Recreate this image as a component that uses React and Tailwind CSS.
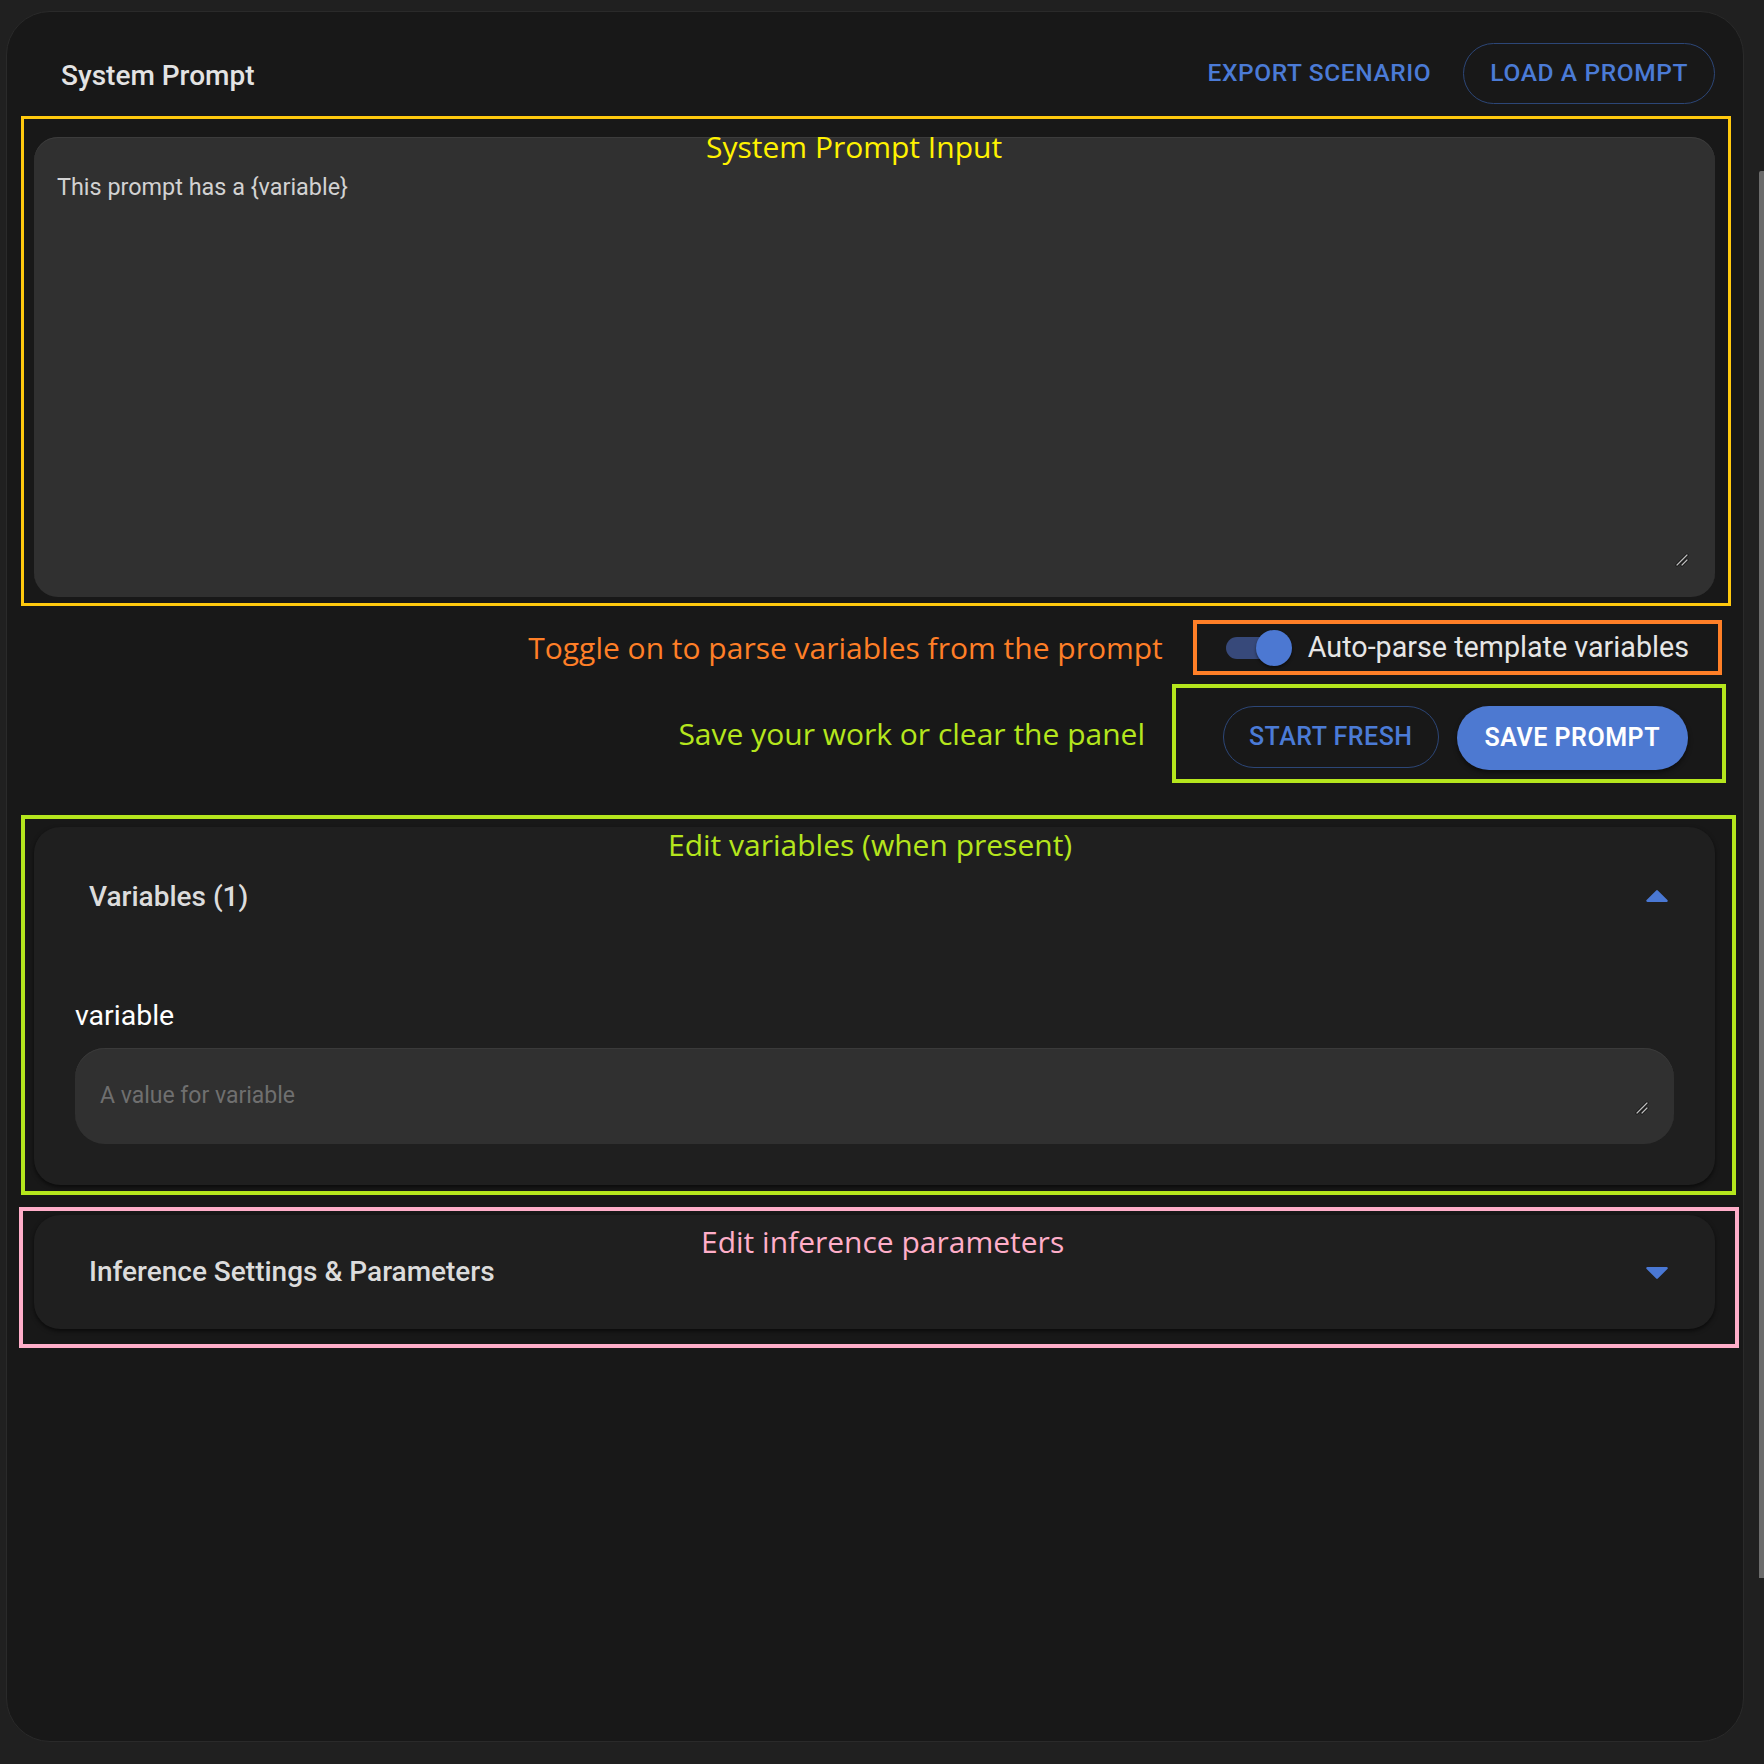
import React from "react";

const ui = { fontFamily: "Roboto, 'Liberation Sans', sans-serif" };
const note = { fontFamily: "'Open Sans', 'Noto Sans', sans-serif" };

function Arrow({ up }) {
  return (
    <svg width="46" height="46" viewBox="0 0 24 24" className="shrink-0">
      <path
        d={up ? "M7 14l5-5 5 5z" : "M7 10l5 5 5-5z"}
        fill="#4a78d4"
        stroke="#4a78d4"
        strokeWidth="1.2"
        strokeLinejoin="round"
      />
    </svg>
  );
}

function Grip({ className }) {
  return (
    <svg width="14" height="14" viewBox="0 0 14 14" className={className}>
      <path d="M2 12 L12 2 M7 12 L12 7" stroke="#111" strokeWidth="3" strokeLinecap="round" />
      <path d="M2 12 L12 2 M7 12 L12 7" stroke="#bdbdbd" strokeWidth="1.3" strokeLinecap="round" />
    </svg>
  );
}

export default function App() {
  return (
    <div className="flex h-[1764px] w-[1764px] bg-[#202020] overflow-hidden" style={ui}>
      <div className="relative mt-[11px] ml-[6px] h-[1731px] w-[1738px] shrink-0 rounded-[44px] border border-[#2a2a2a] bg-[#181818] pt-[31px] pl-[27px] pr-[28px]">
        {/* header */}
        <div className="flex h-[61px] items-center justify-between">
          <h2 className="pl-[27px] pt-[4px] text-[28px] font-medium text-[#e3e3e3]">System Prompt</h2>
          <div className="flex items-center gap-[16px]">
            <button className="h-[61px] px-[16px] text-[24.5px] font-medium uppercase tracking-[0.025em] text-[#4b7bd6]">
              Export Scenario
            </button>
            <button className="h-[61px] rounded-full border border-[#2c4677] px-[26px] text-[24.5px] font-medium uppercase tracking-[0.025em] text-[#4b7bd6]">
              Load a Prompt
            </button>
          </div>
        </div>

        {/* system prompt input */}
        <div className="relative mt-[33px]">
          <div className="absolute -top-[21px] -left-[13px] -right-[16px] -bottom-[9px] border-[3px] border-[#ffc90e]" />
          <div className="relative h-[460px] rounded-[24px] bg-[#303030] px-[23px] pt-[35px] shadow-[inset_0_1px_0_#3c3c3c]">
            <p className="text-[23.4px] leading-[30px] text-[#d2d2d2]">This prompt has a {"{variable}"}</p>
            <Grip className="absolute right-[26px] bottom-[30px]" />
          </div>
          <span
            className="absolute left-[672px] -top-[11px] whitespace-nowrap text-[30px] leading-[42px] text-[#fff200]"
            style={note}
          >
            System Prompt Input
          </span>
        </div>

        {/* toggle row */}
        <div className="mt-[23px] -mr-[7px] flex items-center justify-end gap-[30px]">
          <span className="whitespace-nowrap text-[30px] text-[#ff7f27]" style={note}>
            Toggle on to parse variables from the prompt
          </span>
          <div className="flex h-[55px] items-center border-4 border-[#ff7f27] pl-[29px] pr-[29px]">
            <div className="relative h-[36px] w-[66px]">
              <div className="absolute left-0 top-[7px] h-[22px] w-[60px] rounded-full bg-[#37497a]" />
              <div className="absolute right-0 top-0 h-[36px] w-[36px] rounded-full bg-[#4c78d2] shadow-[0_2px_3px_rgba(0,0,0,0.45)]" />
            </div>
            <span className="ml-[16px] whitespace-nowrap text-[28.7px] text-[#e6e6e6]">Auto-parse template variables</span>
          </div>
        </div>

        {/* buttons row */}
        <div className="mt-[9px] -mr-[11px] flex items-center justify-end gap-[27px]">
          <span className="whitespace-nowrap text-[30px] text-[#b5e61d]" style={note}>
            Save your work or clear the panel
          </span>
          <div className="flex h-[99px] items-start gap-[18px] border-4 border-[#b5e61d] pt-[18px] pl-[47px] pr-[34px]">
            <button className="h-[62px] rounded-full border border-[#2c4677] px-[25px] text-[25px] font-medium uppercase tracking-[0.02em] text-[#4b7bd6]">
              Start Fresh
            </button>
            <button className="h-[64px] rounded-full bg-[#4d79d1] px-[28px] text-[25px] font-semibold uppercase tracking-[0.02em] text-white shadow-[0_3px_5px_rgba(0,0,0,0.45)]">
              Save Prompt
            </button>
          </div>
        </div>

        {/* variables accordion */}
        <div className="relative mt-[44px]">
          <div className="absolute -top-[12px] -left-[13px] -right-[21px] -bottom-[10px] border-4 border-[#b5e61d]" />
          <div className="relative rounded-[26px] bg-[#1f1f1f] shadow-[0_2px_4px_rgba(0,0,0,0.6)]">
            <div className="flex h-[140px] items-center justify-between pl-[55px] pr-[35px]">
              <span className="text-[28px] font-medium text-[#dcdcdc]">Variables (1)</span>
              <Arrow up />
            </div>
            <div className="px-[41px] pt-[31px] pb-[41px]">
              <label className="block text-[28.5px] leading-[36px] text-white">variable</label>
              <div className="relative mt-[14px] flex h-[96px] items-center rounded-[30px] bg-[#303030] pl-[25px] shadow-[inset_0_1px_0_#3a3a3a]">
                <span className="text-[23px] text-[#6f6f6f]">A value for variable</span>
                <Grip className="absolute right-[25px] bottom-[29px]" />
              </div>
            </div>
            <span
              className="absolute left-[634px] -top-[3px] whitespace-nowrap text-[30px] leading-[42px] text-[#b5e61d]"
              style={note}
            >
              Edit variables (when present)
            </span>
          </div>
        </div>

        {/* inference accordion */}
        <div className="relative mt-[30px]">
          <div className="absolute -top-[8px] -left-[15px] -right-[24px] -bottom-[19px] border-4 border-[#ffaec9]" />
          <div className="relative flex h-[114px] items-center justify-between rounded-[26px] bg-[#1f1f1f] pl-[55px] pr-[35px] shadow-[0_2px_4px_rgba(0,0,0,0.6)]">
            <span className="text-[28px] font-medium text-[#dcdcdc]">Inference Settings &amp; Parameters</span>
            <Arrow />
            <span
              className="absolute left-[667px] top-[6px] whitespace-nowrap text-[30px] leading-[42px] text-[#ffaec9]"
              style={note}
            >
              Edit inference parameters
            </span>
          </div>
        </div>
      </div>

      {/* scrollbar */}
      <div className="ml-auto mt-[171px] h-[1407px] w-[5px] rounded-tl-[2px] bg-[#6b6b6b]" />
    </div>
  );
}
